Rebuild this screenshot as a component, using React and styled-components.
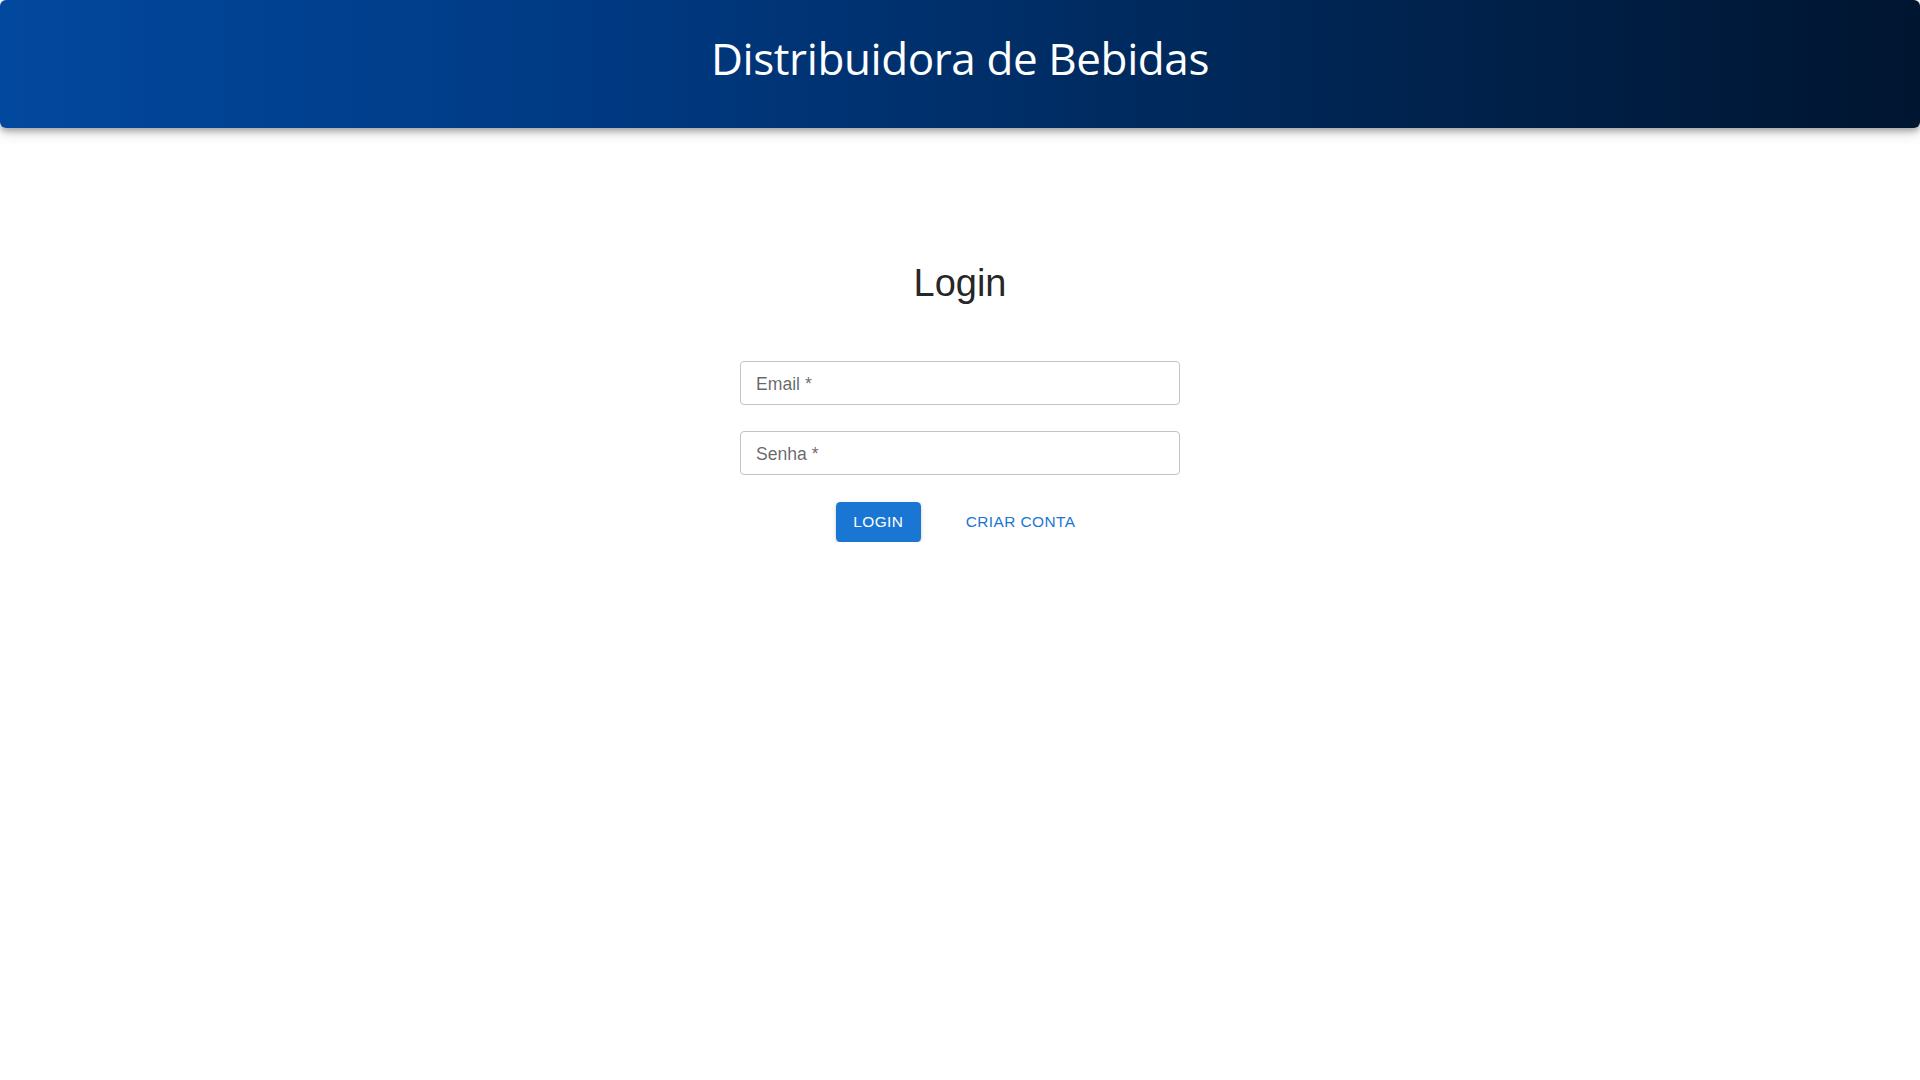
import React from 'react';
import styled, { createGlobalStyle } from 'styled-components';

const GlobalStyle = createGlobalStyle`
  * {
    box-sizing: border-box;
  }
  body {
    margin: 0;
    background: #ffffff;
    font-family: 'Liberation Sans', Arial, sans-serif;
  }
`;

const Header = styled.header`
  height: 128px;
  display: flex;
  align-items: center;
  justify-content: center;
  padding-bottom: 12px;
  border-radius: 6px;
  background: linear-gradient(90deg, #02489e 0%, #003a84 30%, #002a5e 60%, #001530 100%);
  box-shadow: 0 3px 6px rgba(0, 0, 0, 0.3), 0 6px 14px rgba(0, 0, 0, 0.12);

  h1 {
    margin: 0;
    color: #ffffff;
    font-family: 'Open Sans', 'Noto Sans', sans-serif;
    font-size: 44px;
    font-weight: 400;
    letter-spacing: -0.4px;
  }
`;

const Main = styled.main`
  display: flex;
  flex-direction: column;
  align-items: center;
  padding-top: 132px;

  h2 {
    margin: 0 0 54px;
    font-size: 38px;
    line-height: 47px;
    font-weight: 400;
    color: rgba(0, 0, 0, 0.87);
  }
`;

const Form = styled.form`
  width: 440px;
  display: flex;
  flex-direction: column;
  gap: 26px;
`;

const Field = styled.label`
  height: 44px;
  display: flex;
  align-items: center;
  padding: 2px 15px 0;
  border: 1px solid #c4c4c4;
  border-radius: 4px;
  cursor: text;

  span {
    color: rgba(0, 0, 0, 0.6);
    font-size: 17.6px;
    white-space: nowrap;
  }

  input {
    flex: 1;
    min-width: 0;
    border: none;
    outline: none;
    background: transparent;
    font: inherit;
  }
`;

const Actions = styled.div`
  display: flex;
  justify-content: center;
  gap: 36px;
  margin-top: 1px;
`;

const Button = styled.button`
  height: 40px;
  padding: 0 ${(p) => (p.$contained ? '17.6px' : '8.8px')};
  border: none;
  border-radius: 4.4px;
  font-family: 'Liberation Sans', Arial, sans-serif;
  font-size: 15.4px;
  font-weight: 400;
  letter-spacing: 0.44px;
  text-transform: uppercase;
  cursor: pointer;
  color: ${(p) => (p.$contained ? '#ffffff' : '#1976d2')};
  background: ${(p) => (p.$contained ? '#1976d2' : 'transparent')};
  box-shadow: ${(p) =>
    p.$contained
      ? '0 3px 1px -2px rgba(0,0,0,0.2), 0 2px 2px 0 rgba(0,0,0,0.14), 0 1px 5px 0 rgba(0,0,0,0.12)'
      : 'none'};
`;

const App = () => {
  return (
    <>
      <GlobalStyle />
      <Header>
        <h1>Distribuidora de Bebidas</h1>
      </Header>
      <Main>
        <h2>Login</h2>
        <Form onSubmit={(e) => e.preventDefault()}>
          <Field>
            <span>Email *</span>
            <input type="email" />
          </Field>
          <Field>
            <span>Senha *</span>
            <input type="password" />
          </Field>
          <Actions>
            <Button $contained type="submit">
              Login
            </Button>
            <Button type="button">Criar conta</Button>
          </Actions>
        </Form>
      </Main>
    </>
  );
};

export default App;
